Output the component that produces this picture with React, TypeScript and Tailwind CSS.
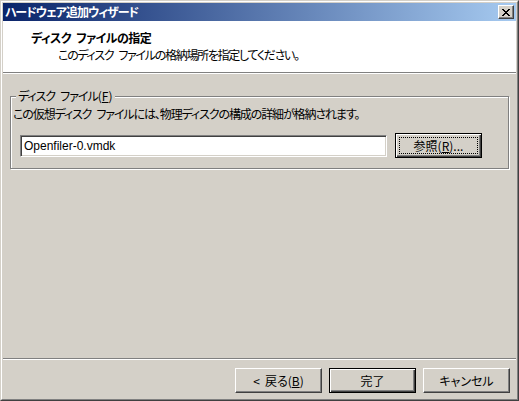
import React from 'react'

const face = "font-['Noto_Sans_CJK_JP','Noto_Sans',sans-serif] [font-feature-settings:'palt']"

const Gap = () => <span className="inline-block w-[5px]" />

function CloseGlyph() {
  // classic 8x7 pixel "X"
  const rows = ['11000011', '01100110', '00111100', '00011000', '00111100', '01100110', '11000011']
  return (
    <svg width="8" height="7" viewBox="0 0 8 7" shapeRendering="crispEdges">
      {rows.map((r, y) =>
        r.split('').map((c, x) => (c === '1' ? <rect key={`${x}-${y}`} x={x} y={y} width="1" height="1" fill="#000" /> : null))
      )}
    </svg>
  )
}

function Btn({ children, isDefault = false, focus = false, className = '' }: { children: React.ReactNode; isDefault?: boolean; focus?: boolean; className?: string }) {
  return (
    <div
      className={`relative h-[25px] w-[87px] flex items-center justify-center bg-[#D4D0C8] tracking-normal ${
        isDefault
          ? 'border border-black shadow-[inset_1px_1px_0_#fff,inset_-1px_-1px_0_#404040,inset_-2px_-2px_0_#808080]'
          : 'border border-t-white border-l-white border-r-[#404040] border-b-[#404040] shadow-[inset_-1px_-1px_0_#808080]'
      } ${className}`}
    >
      {focus && <div className="absolute inset-[3px] border border-dotted border-black" aria-hidden="true" />}
      <span className="relative">{children}</span>
    </div>
  )
}

export default function App() {
  return (
    <div className={`w-[519px] h-[401px] border border-t-[#D4D0C8] border-l-[#D4D0C8] border-r-[#404040] border-b-[#404040] text-[12px] leading-[14px] tracking-[-1px] text-black ${face}`}>
      <div className="h-full flex flex-col bg-[#D4D0C8] p-px border border-t-white border-l-white border-r-[#808080] border-b-[#808080]">
        {/* ── TITLE BAR ── */}
        <div className="h-[18px] shrink-0 flex items-center justify-between px-[2px] bg-[linear-gradient(to_right,#0A246A,#A6CAF0)]">
          <span className="font-bold text-white">ハードウェア追加ウィザード</span>
          <div className="w-[16px] h-[14px] flex items-center justify-center bg-[#D4D0C8] border border-t-white border-l-white border-r-[#404040] border-b-[#404040] shadow-[inset_-1px_-1px_0_#808080]">
            <CloseGlyph />
          </div>
        </div>

        {/* ── HEADER ── */}
        <div className="h-[51px] shrink-0 bg-white pt-[10px]">
          <div className="pl-[28px] font-bold tracking-[-0.5px]">ディスク<Gap />ファイルの指定</div>
          <div className="pl-[55px] mt-[3px] tracking-[-1.3px]">このディスク<Gap />ファイルの格納場所を指定してください。</div>
        </div>
        <div className="h-[2px] shrink-0 border-t border-t-[#808080] border-b border-b-white" />

        {/* ── GROUP BOX ── */}
        <div className="relative mt-[22px] mx-[7px] border border-[#808080] shadow-[1px_1px_0_#fff,inset_1px_1px_0_#fff]">
          <span className="absolute left-[5px] -top-[8px] px-[2px] bg-[#D4D0C8]">
            ディスク<Gap />ファイル<span className="tracking-normal">(<span className="underline">F</span>)</span>
          </span>
          <p className="ml-[2px] mt-[10px] tracking-[-1.1px]">この仮想ディスク<Gap />ファイルには、物理ディスクの構成の詳細が格納されます。</p>
          <div className="flex items-center gap-[8px] ml-[9px] mt-[12px] mb-[10px]">
            <div className="w-[367px] h-[22px] flex items-center pl-[3px] bg-white border border-t-[#808080] border-l-[#808080] border-r-white border-b-white shadow-[inset_1px_1px_0_#404040,inset_-1px_-1px_0_#D4D0C8] font-['Liberation_Sans',sans-serif] text-[12px] tracking-normal">
              Openfiler-0.vmdk
            </div>
            <Btn isDefault focus>
              参照(<span className="underline">R</span>)...
            </Btn>
          </div>
        </div>

        <div className="flex-1" />

        {/* ── FOOTER ── */}
        <div className="h-[2px] shrink-0 border-t border-t-[#808080] border-b border-b-white" />
        <div className="flex justify-end gap-[7px] pt-[8px] pb-[5px] pr-[6px]">
          <Btn>
            &lt;<Gap />戻る(<span className="underline">B</span>)
          </Btn>
          <Btn isDefault>完了</Btn>
          <Btn>キャンセル</Btn>
        </div>
      </div>
    </div>
  )
}
